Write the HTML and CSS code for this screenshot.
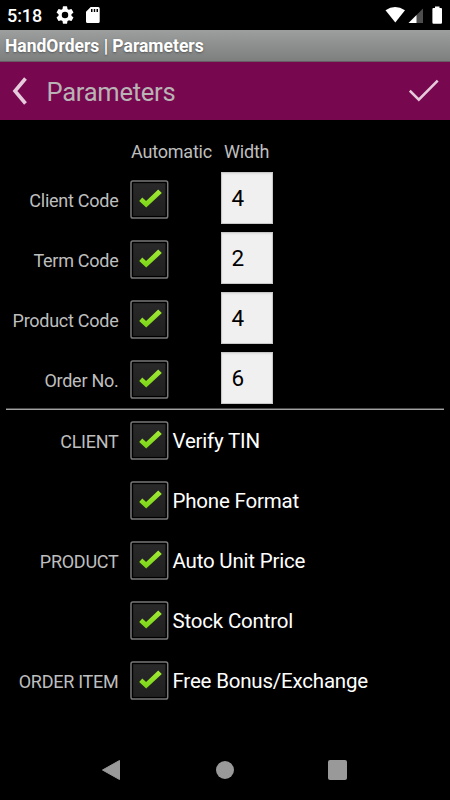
FILE: index.html
```
<!DOCTYPE html>
<html lang="en">
<head>
<meta charset="utf-8">
<title>HandOrders | Parameters</title>
<link rel="stylesheet" href="styles.css">
</head>
<body>
<svg width="0" height="0" class="defs">
  <defs>
    <linearGradient id="green" x1="0" y1="0" x2="0" y2="1"><stop offset="0" stop-color="#a4ea38"/><stop offset="1" stop-color="#78d414"/></linearGradient>
    <linearGradient id="dark" x1="0" y1="0" x2="0" y2="1"><stop offset="0" stop-color="#292929"/><stop offset="1" stop-color="#202020"/></linearGradient>
    <symbol id="tick" viewBox="0 0 40 40"><rect x="1" y="1.1" width="36.7" height="36.9" rx="1.8" fill="#000" stroke="#787878" stroke-width="1.5"/><rect x="3.2" y="3.2" width="32.3" height="32.7" fill="url(#dark)"/><path d="M9.2 20.9L12.3 17.6L16.1 21L28.2 9.6L31.8 13.1L16.2 27.5Z" fill="url(#green)"/></symbol>
  </defs>
</svg>
<div class="status">
  <span class="clock">5:18</span>
  <svg class="gear" width="18" height="18" viewBox="2 2 20 20"><path fill="#fff" d="M19.14 12.94c.04-.3.06-.61.06-.94 0-.32-.02-.64-.07-.94l2.03-1.58a.49.49 0 0 0 .12-.61l-1.92-3.32a.49.49 0 0 0-.59-.22l-2.39.96c-.5-.38-1.03-.7-1.62-.94l-.36-2.54a.48.48 0 0 0-.48-.41h-3.84a.47.47 0 0 0-.47.41l-.36 2.54c-.59.24-1.13.57-1.62.94l-2.39-.96a.48.48 0 0 0-.59.22L2.74 8.87a.47.47 0 0 0 .12.61l2.03 1.58c-.05.3-.09.63-.09.94s.02.64.07.94l-2.03 1.58a.49.49 0 0 0-.12.61l1.92 3.32c.12.22.37.29.59.22l2.39-.96c.5.38 1.03.7 1.62.94l.36 2.54c.05.24.24.41.48.41h3.84c.24 0 .44-.17.47-.41l.36-2.54c.59-.24 1.13-.56 1.62-.94l2.39.96c.22.08.47 0 .59-.22l1.92-3.32a.47.47 0 0 0-.12-.61l-2.01-1.58zM12 15.6a3.6 3.6 0 1 1 0-7.2 3.6 3.6 0 0 1 0 7.2z"/></svg>
  <svg class="card" width="14" height="16" viewBox="0 0 14 16"><path fill="#fff" fill-rule="evenodd" d="M4.7 0H12.3Q13.7 0 13.7 1.5V14.5Q13.7 16 12.3 16H1.5Q0 16 0 14.5V4.8ZM5 2V5H6.5V2ZM7.8 2V5H9.2V2ZM10.5 2V5H12V2Z"/></svg>
  <svg class="signals" width="58" height="18" viewBox="0 0 58 18"><path fill="#fff" d="M.5 4.2Q10 -2 20 4.2L10.3 16.5Z"/><path fill="#4d4d4d" d="M38 2.5V17H31V9.5Z"/><path fill="#fff" d="M31.5 9V17H23.5Z"/><path fill="#fff" d="M50 .5H54.5V2H56Q57 2 57 3V16.5Q57 17.7 56 17.7H48.4Q47.4 17.7 47.4 16.5V3Q47.4 2 48.4 2H50Z"/></svg>
</div>
<div class="titlebar">HandOrders | Parameters</div>
<header class="header">
  <svg width="16" height="28" viewBox="0 0 16 28"><path d="M13.5 1.5L3 14L13.5 26.5" fill="none" stroke="#e6cbdc" stroke-width="3.6"/></svg>
  <h1>Parameters</h1>
  <svg class="ok" width="31" height="24" viewBox="0 0 31 24"><path d="M.8 11.8L9.8 20.6L28.7 1.6" fill="none" stroke="#e6cbdc" stroke-width="2.6"/></svg>
</header>
<main>
  <div class="row heads"><span class="auto">Automatic</span><span class="width">Width</span></div>
  <div class="row"><span class="label">Client Code</span><svg class="box"><use href="#tick"/></svg><span class="field">4</span></div>
  <div class="row"><span class="label">Term Code</span><svg class="box"><use href="#tick"/></svg><span class="field">2</span></div>
  <div class="row"><span class="label">Product Code</span><svg class="box"><use href="#tick"/></svg><span class="field">4</span></div>
  <div class="row"><span class="label">Order No.</span><svg class="box"><use href="#tick"/></svg><span class="field">6</span></div>
  <div class="divider"></div>
  <div class="row"><span class="label">CLIENT</span><svg class="box"><use href="#tick"/></svg><span class="option">Verify TIN</span></div>
  <div class="row"><span class="label"></span><svg class="box"><use href="#tick"/></svg><span class="option">Phone Format</span></div>
  <div class="row"><span class="label">PRODUCT</span><svg class="box"><use href="#tick"/></svg><span class="option">Auto Unit Price</span></div>
  <div class="row"><span class="label"></span><svg class="box"><use href="#tick"/></svg><span class="option">Stock Control</span></div>
  <div class="row"><span class="label">ORDER ITEM</span><svg class="box"><use href="#tick"/></svg><span class="option">Free Bonus/Exchange</span></div>
</main>
<nav>
  <svg width="20" height="22" viewBox="0 0 20 22"><path d="M1.5 11L18.5 1.5V20.5Z" fill="#999" stroke="#999" stroke-linejoin="round"/></svg>
  <span class="home"></span>
  <span class="recent"></span>
</nav>
</body>
</html>
```

FILE: styles.css
```
* { box-sizing: border-box; }
body { margin: 0; width: 450px; height: 800px; overflow: hidden; background: #000; color: #fff; font-family: Roboto, sans-serif; display: flex; flex-direction: column; }
svg { display: block; flex: none; }
.defs { position: absolute; }
.status { height: 30px; flex: none; display: flex; align-items: center; padding: 0 7px 0 7px; }
.clock { width: 49px; font-size: 18px; font-weight: 500; letter-spacing: -0.1px; padding-top: 1px; }
.card { margin-left: 12px; }
.signals { margin-left: auto; }
.titlebar { height: 32px; flex: none; padding-left: 5px; font-size: 17.5px; letter-spacing: -0.01px; line-height: 32px; font-weight: 700; background: linear-gradient(#9d9f9e, #7d7f7e); border-bottom: 1px solid #665c62; text-shadow: 0 1px 2px #555; white-space: nowrap; }
.header { height: 58px; flex: none; display: flex; align-items: center; padding: 0 10px 0 12px; background: #77074f; }
.header h1 { margin: 2px 0 0 18.5px; font-size: 25.5px; letter-spacing: -0.25px; font-weight: 400; color: #b9b3b6; }
.ok { margin-left: auto; }
main { flex: 1; }
.row { height: 60px; display: flex; align-items: center; }
.heads { height: 50px; padding: 12px 0 0 131px; color: #bebebe; font-size: 18px; letter-spacing: -0.2px; }
.auto { width: 93px; }
.label { width: 118.5px; flex: none; text-align: right; color: #bebebe; font-size: 18px; letter-spacing: -0.26px; padding-top: 1px; }
.box { width: 40px; height: 40px; margin-left: 11.5px; }
.field { width: 52px; height: 52px; margin: -4px 0 0 51px; padding-left: 9.5px; line-height: 51px; background: #f0f0f0; border: 1px solid #c8c8c8; box-shadow: inset 0 1px 2px #ddd; color: #000; font-size: 22.5px; }
.divider { height: 2px; margin: -2px 6px 1px; background: linear-gradient(#4a4a4a 50%, #a2a2a2 50%); }
.option { margin-left: 2.5px; font-size: 20.5px; letter-spacing: -0.2px; white-space: nowrap; }
nav { height: 60px; flex: none; display: flex; align-items: center; justify-content: space-between; padding: 0 103px 0 101px; }
.home { width: 18px; height: 18px; border-radius: 50%; background: #999; }
.recent { width: 19px; height: 20px; border-radius: 2px; background: #999; }
```
